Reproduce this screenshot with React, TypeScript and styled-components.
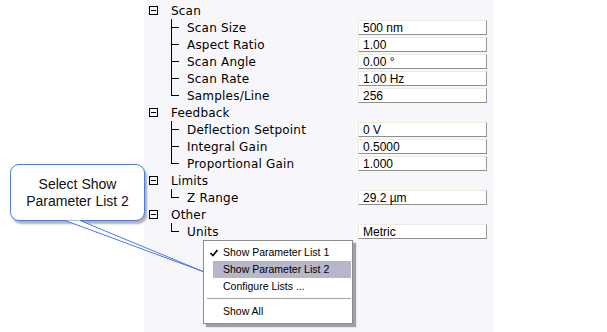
import React from "react";
import styled, { createGlobalStyle } from "styled-components";

const GlobalStyle = createGlobalStyle`
  body {
    margin: 0;
    background: #ffffff;
  }
`;

const Page = styled.div`
  position: relative;
  width: 607px;
  height: 332px;
  overflow: hidden;
  display: flex;
  background: #ffffff;
`;

const Spacer = styled.div`
  width: 144px;
  flex: none;
`;

const Panel = styled.div`
  width: 350px;
  flex: none;
  background: #f7f7fb;
  padding-top: 2px;
  display: flex;
  flex-direction: column;
`;

const Row = styled.div`
  height: 17px;
  display: flex;
  align-items: center;
`;

const LabelCell = styled.div<{ $child?: boolean }>`
  width: 214px;
  height: 100%;
  flex: none;
  display: flex;
  align-items: center;
  padding-left: ${(p) => (p.$child ? "27px" : "5px")};
  box-sizing: border-box;
  font-family: "DejaVu Sans", sans-serif;
  font-size: 12px;
  letter-spacing: 0.2px;
  color: #000;
  white-space: nowrap;
`;

const GroupText = styled.span`
  margin-left: 13px;
`;

const Connector = styled.span<{ $last?: boolean }>`
  position: relative;
  width: 16px;
  height: 100%;
  flex: none;

  &::before {
    content: "";
    position: absolute;
    left: 0;
    top: 0;
    width: 1px;
    height: ${(p) => (p.$last ? "9px" : "17px")};
    background: #000;
  }

  &::after {
    content: "";
    position: absolute;
    left: 0;
    top: 8px;
    width: 8px;
    height: 1px;
    background: #000;
  }
`;

const ValueBox = styled.div`
  width: 129px;
  height: 15px;
  box-sizing: border-box;
  background: #fff;
  border-top: 1px solid #ecebdf;
  border-left: 1px solid #ecebdf;
  border-right: 1px solid #9a9a9a;
  border-bottom: 1px solid #8f8f8f;
  padding-left: 4px;
  font-family: "Liberation Sans", Arial, sans-serif;
  font-size: 12px;
  line-height: 14px;
  color: #000;
  white-space: nowrap;
`;

const Callout = styled.div`
  position: absolute;
  left: 10px;
  top: 164px;
  width: 135px;
  height: 57px;
  box-sizing: border-box;
  border: 1px solid #4b79df;
  border-radius: 9px;
  background: #fff;
  box-shadow: 2px 3px 2px rgba(0, 0, 0, 0.3);
  display: flex;
  align-items: center;
  justify-content: center;
  text-align: center;
  font-family: "Liberation Sans", Arial, sans-serif;
  font-size: 14px;
  line-height: 17px;
  color: #111;
  z-index: 1;
`;

const Pointer = styled.svg`
  position: absolute;
  left: 0;
  top: 0;
  pointer-events: none;
  z-index: 2;
`;

const Menu = styled.div`
  position: absolute;
  left: 203px;
  top: 240px;
  width: 150px;
  box-sizing: border-box;
  padding: 3px 1px 3px 0;
  background: #fff;
  border: 1px solid #8c8c8c;
  box-shadow: 3px 3px 1px rgba(0, 0, 0, 0.35);
  z-index: 3;
  font-family: "Liberation Sans", Arial, sans-serif;
  font-size: 10.5px;
  color: #000;
`;

const MenuItem = styled.div<{ $active?: boolean }>`
  position: relative;
  height: 17px;
  line-height: 17px;
  margin-left: 9px;
  padding-left: 10px;
  background: ${(p) => (p.$active ? "#b8b7c9" : "transparent")};
  white-space: nowrap;
`;

const Check = styled.svg`
  position: absolute;
  left: -3px;
  top: 5px;
`;

const Separator = styled.div`
  height: 1px;
  margin: 3px 0 4px 3px;
  background: #a3a3a3;
`;

const MinusBox = () => (
  <svg width="9" height="9" viewBox="0 0 9 9">
    <rect x="0.5" y="0.5" width="8" height="8" fill="none" stroke="#000" />
    <line x1="2" y1="4.5" x2="7" y2="4.5" stroke="#000" />
  </svg>
);

type Param = { label: string; value: string };
type Group = { name: string; items: Param[] };

const groups: Group[] = [
  {
    name: "Scan",
    items: [
      { label: "Scan Size", value: "500 nm" },
      { label: "Aspect Ratio", value: "1.00" },
      { label: "Scan Angle", value: "0.00 °" },
      { label: "Scan Rate", value: "1.00 Hz" },
      { label: "Samples/Line", value: "256" },
    ],
  },
  {
    name: "Feedback",
    items: [
      { label: "Deflection Setpoint", value: "0 V" },
      { label: "Integral Gain", value: "0.5000" },
      { label: "Proportional Gain", value: "1.000" },
    ],
  },
  { name: "Limits", items: [{ label: "Z Range", value: "29.2 µm" }] },
  { name: "Other", items: [{ label: "Units", value: "Metric" }] },
];

export default function App() {
  return (
    <>
      <GlobalStyle />
      <Page>
        <Spacer />
        <Panel>
          {groups.map((g) => (
            <React.Fragment key={g.name}>
              <Row>
                <LabelCell>
                  <MinusBox />
                  <GroupText>{g.name}</GroupText>
                </LabelCell>
              </Row>
              {g.items.map((it, i) => (
                <Row key={it.label}>
                  <LabelCell $child>
                    <Connector $last={i === g.items.length - 1} />
                    {it.label}
                  </LabelCell>
                  <ValueBox>{it.value}</ValueBox>
                </Row>
              ))}
            </React.Fragment>
          ))}
        </Panel>

        <Callout>
          Select Show
          <br />
          Parameter List 2
        </Callout>

        <Pointer width="607" height="332" viewBox="0 0 607 332">
          <polyline
            points="65,220.5 203,271.5 80,220.5"
            fill="#fff"
            stroke="#4b79df"
            strokeWidth="1"
          />
        </Pointer>

        <Menu>
          <MenuItem>
            <Check width="8" height="8" viewBox="0 0 8 8">
              <path d="M0.5 4 L3 6.5 L7.5 1" fill="none" stroke="#000" strokeWidth="1.6" />
            </Check>
            Show Parameter List 1
          </MenuItem>
          <MenuItem $active>Show Parameter List 2</MenuItem>
          <MenuItem>Configure Lists ...</MenuItem>
          <Separator />
          <MenuItem>Show All</MenuItem>
        </Menu>
      </Page>
    </>
  );
}
